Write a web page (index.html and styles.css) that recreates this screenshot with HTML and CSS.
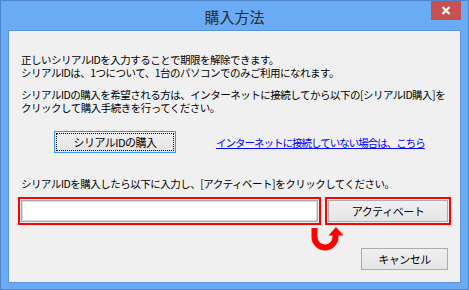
FILE: index.html
```html
<!DOCTYPE html>
<html lang="ja">
<head>
<meta charset="utf-8">
<title>購入方法</title>
<link rel="stylesheet" href="styles.css">
</head>
<body>
<div class="window">
  <div class="titlebar">
    <div class="title">購入方法</div>
    <div class="close">
      <svg width="10" height="9" viewBox="0 0 10 9"><path d="M1.5 1 L8.5 8 M8.5 1 L1.5 8" stroke="#fff" stroke-width="2.2" fill="none"/></svg>
    </div>
  </div>
  <div class="content">
    <div class="para">
      <div class="line">正しいシリアルIDを入力することで期限を解除できます。</div>
      <div class="line">シリアルIDは、1つについて、1台のパソコンでのみご利用になれます。</div>
    </div>
    <div class="para para2">
      <div class="line">シリアルIDの購入を希望される方は、インターネットに接続してから以下の[シリアルID購入]を</div>
      <div class="line">クリックして購入手続きを行ってください。</div>
    </div>
    <div class="buy-row">
      <div class="btn btn-focus"><span class="focus-ring">シリアルIDの購入</span></div>
      <a class="link" href="#">インターネットに接続していない場合は、こちら</a>
    </div>
    <div class="para para3">
      <div class="line">シリアルIDを購入したら以下に入力し、[アクティベート]をクリックしてください。</div>
    </div>
    <div class="input-row">
      <div class="hl hl-input"><div class="textbox"></div></div>
      <div class="hl hl-btn"><div class="btn btn-activate">アクティベート</div></div>
    </div>
    <div class="bottom-row">
      <svg class="arrow" width="38" height="26" viewBox="0 0 38 26">
        <path d="M5.5 2 V11 A10.5 10.5 0 0 0 26.5 11 V8" stroke="#ff0000" stroke-width="6" fill="none"/>
        <path d="M19.5 9.5 L27 1 L34.5 9.5 Z" fill="#ff0000"/>
      </svg>
      <div class="btn btn-cancel">キャンセル</div>
    </div>
  </div>
</div>
</body>
</html>
```
FILE: styles.css
```css
html, body {
  margin: 0;
  padding: 0;
  background: #ffffff;
}

.window {
  width: 469px;
  height: 290px;
  box-sizing: border-box;
  border: 1px solid #4f86c9;
  background: #6aabf5;
  padding: 0 7px 6px 7px;
  display: flex;
  flex-direction: column;
  font-family: "Noto Sans CJK JP", "Noto Sans", sans-serif;
}

.titlebar {
  height: 29px;
  display: grid;
  grid-template-columns: 1fr auto 1fr;
}

.title {
  grid-column: 2;
  align-self: center;
  padding-top: 2px;
  font-size: 15px;
  line-height: 18px;
  color: #2b2b2b;
}

.close {
  grid-column: 3;
  justify-self: end;
  align-self: start;
  width: 30px;
  height: 19px;
  background: #c75050;
  display: flex;
  align-items: center;
  justify-content: center;
}

.content {
  flex: 1;
  border: 1px solid #5a95da;
  background: #f0f0f0;
  padding: 22px 9px 0 9px;
  font-size: 10.5px;
  letter-spacing: -0.5px;
  color: #000;
}

.para {
  margin-left: 3px;
}

.line {
  height: 13px;
  line-height: 13px;
  white-space: nowrap;
}

.para2 {
  margin-top: 9px;
}

.buy-row {
  margin-top: 17px;
  display: flex;
  align-items: center;
}

.btn {
  box-sizing: border-box;
  border: 1px solid #acacac;
  background: linear-gradient(#f0f0f0, #e5e5e5);
  display: flex;
  align-items: center;
  justify-content: center;
  font-size: 11px;
  line-height: 13px;
}

.btn-focus {
  margin-left: 36px;
  width: 122px;
  height: 22px;
  border-color: #3399ff;
  padding: 1px;
}

.focus-ring {
  flex: 1;
  align-self: stretch;
  display: flex;
  align-items: center;
  justify-content: center;
  border: 1px dotted #000;
}

.link {
  margin-left: 40px;
  color: #0000ff;
  text-decoration: underline;
  line-height: 13px;
  letter-spacing: -1px;
}

.para3 {
  margin-top: 24px;
}

.input-row {
  margin-top: 7px;
  display: flex;
  gap: 4px;
}

.hl {
  box-sizing: border-box;
  height: 28px;
  border: 2px solid #ff0000;
  padding: 1px;
  display: flex;
}

.hl-input {
  flex: 1;
}

.hl-btn {
  width: 126px;
}

.textbox {
  flex: 1;
  border: 1px solid #a9a9a9;
  box-shadow: inset 0 0 0 1px #dcdcdc;
  background: #ffffff;
}

.btn-activate {
  flex: 1;
}

.bottom-row {
  margin-top: 1px;
  display: flex;
  align-items: flex-start;
}

.arrow {
  margin-left: 291px;
  display: block;
}

.btn-cancel {
  margin-left: auto;
  margin-right: 3px;
  margin-top: 22px;
  width: 87px;
  height: 22px;
}
```
